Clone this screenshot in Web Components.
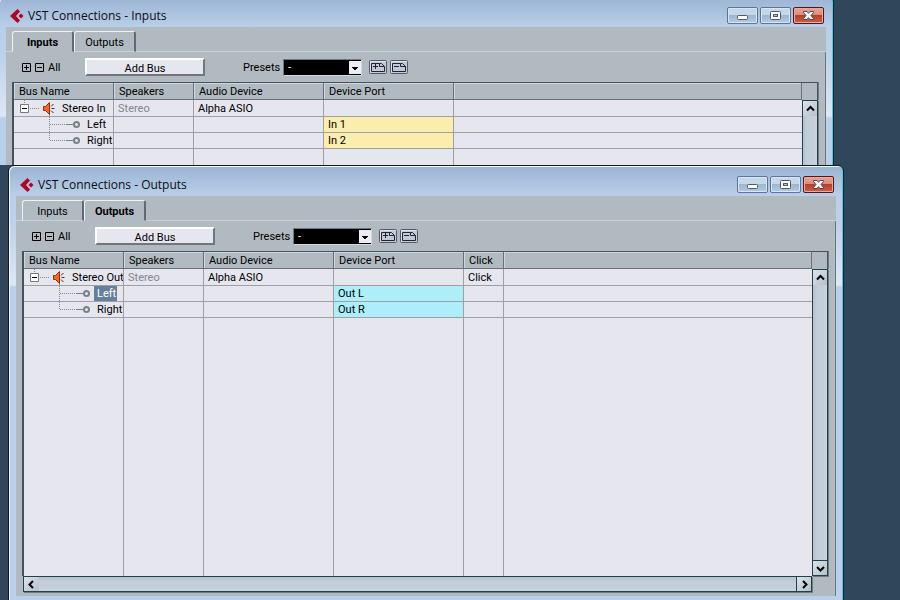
<!DOCTYPE html>
<html lang="en">
<head>
<meta charset="utf-8">
<title>VST Connections</title>
<style>
    html, body {
        height: 100%;
    }
    body {
        margin: 0;
        position: relative;
        overflow: hidden;
        background: #30465b;
        font: 11px/15px Roboto, "Liberation Sans", sans-serif;
        color: #000;
    }
    /* Overlapping windows on the desktop */
    #inputs {
        position: absolute;
        left: -2px;
        right: 66px;
        top: -4px;
        height: 169px;
    }
    #outputs {
        position: absolute;
        left: 8px;
        right: 56px;
        top: 165px;
        bottom: -3px;
    }
</style>
</head>
<body>
<vst-window id="inputs" heading="VST Connections - Inputs">
    <tab-strip active="Inputs"></tab-strip>
    <tab-page>
        <bus-tools></bus-tools>
        <bus-grid kind="inputs"></bus-grid>
    </tab-page>
</vst-window>
<vst-window id="outputs" heading="VST Connections - Outputs">
    <tab-strip active="Outputs"></tab-strip>
    <tab-page>
        <bus-tools></bus-tools>
        <bus-grid kind="outputs"></bus-grid>
    </tab-page>
</vst-window>

<script>
const BUSES = {
    inputs: {
        columns: ["Bus Name", "Speakers", "Audio Device", "Device Port"],
        widths: [100, 80, 130, 130],
        bus: ["Stereo In", "Stereo", "Alpha ASIO", ""],
        ports: [["Left", "In 1"], ["Right", "In 2"]],
        color: "#faedae"
    },
    outputs: {
        columns: ["Bus Name", "Speakers", "Audio Device", "Device Port", "Click"],
        widths: [100, 80, 130, 130, 40],
        bus: ["Stereo Out", "Stereo", "Alpha ASIO", "", "Click"],
        ports: [["Left", "Out L"], ["Right", "Out R"]],
        selected: "Left",
        color: "#adeef8"
    }
};

class VstWindow extends HTMLElement {
    constructor() {
        super();
        this.attachShadow({mode: 'open'});
    }
    connectedCallback() {
        this.shadowRoot.innerHTML = `
            <style>
                :host {
                    display: flex;
                    flex-direction: column;
                    box-sizing: border-box;
                    overflow: hidden;
                    border: 1px solid #101820;
                    border-radius: 6px 6px 0 0;
                    padding: 0 7px 6px;
                    background: linear-gradient(#9ab4d2 0, #b9cfe9 30px, #bdd2eb 60px, #dce8f5 119px, #b9d0ea 121px);
                    box-shadow: inset 1px 1px 0 #f4faff, inset -1px 0 0 #35d3f5;
                }
                :host(#inputs) {
                    border-bottom: 0;
                    padding-bottom: 0;
                }
                header {
                    display: flex;
                    align-items: center;
                    flex: none;
                    height: 30px;
                    padding: 0 2px 0 4px;
                    gap: 2px;
                }
                h1 {
                    flex: 1;
                    margin: 0 0 0 2px;
                    padding-top: 8px;
                    font: 12px/18px "Open Sans", "Noto Sans", sans-serif;
                    color: #0c0c14;
                }
                .logo {
                    margin-top: 7px;
                }
                main {
                    flex: 1;
                    min-height: 0;
                    display: flex;
                    flex-direction: column;
                    background: #b1bac0;
                }
            </style>
            <header>
                <svg class="logo" width="14" height="14" viewBox="0 0 14 14">
                    <path d="M7.5 0L10 2.5L6 7L10 11.5L7.5 14L0 7Z" fill="#b00426"/>
                    <path d="M11 4.5L13.5 7L11 9.5L8.5 7Z" fill="#b00426"/>
                </svg>
                <h1></h1>
                <window-button action="minimize"></window-button>
                <window-button action="maximize"></window-button>
                <window-button action="close"></window-button>
            </header>
            <main><slot></slot></main>
        `;
        this.shadowRoot.querySelector("h1").textContent = this.getAttribute("heading");
    }
}

class WindowButton extends HTMLElement {
    constructor() {
        super();
        this.attachShadow({mode: 'open'});
    }
    connectedCallback() {
        const glyphs = {
            minimize: `<rect x="10.5" y="8.5" width="10" height="4" rx="1" fill="#fff" stroke="#50586a"/>`,
            maximize: `<rect x="10.5" y="4.5" width="10" height="8" rx="1" fill="#fff" stroke="#50586a"/>
                <rect x="13.5" y="7.5" width="4" height="2" fill="#a9c0dc" stroke="#50586a"/>`,
            close: `<path d="M10.5 4.5H14L15.5 6.3L17 4.5H20.5V5.5L18 8.5L20.5 11.5V12.5H17L15.5 10.7L14 12.5H10.5V11.5L13 8.5L10.5 5.5Z" fill="#f8f8f8" stroke="#504858"/>`
        };
        const action = this.getAttribute("action");
        this.shadowRoot.innerHTML = `
            <style>
                :host {
                    display: block;
                    padding-top: 7px;
                }
                button {
                    display: block;
                    box-sizing: border-box;
                    width: 31px;
                    height: 17px;
                    padding: 0;
                    border: 1px solid #5f7593;
                    border-radius: 2px;
                    background: linear-gradient(#c6d7ea 0 45%, #9ab4d0 45%, #b4cce4);
                    box-shadow: inset 0 0 0 1px #d7e6f5;
                }
                :host([action="close"]) button {
                    border-color: #561420;
                    background: linear-gradient(#e5a598, #dc8c7c 45%, #b43c24 45%, #cc6048);
                    box-shadow: inset 0 0 0 1px #e9aaa0;
                }
                svg {
                    display: block;
                    margin: -1px;
                }
            </style>
            <button type="button" aria-label="${action}">
                <svg width="31" height="17" viewBox="0 0 31 17">${glyphs[action]}</svg>
            </button>
        `;
    }
}

class TabStrip extends HTMLElement {
    constructor() {
        super();
        this.attachShadow({mode: 'open'});
    }
    connectedCallback() {
        const active = this.getAttribute("active");
        this.shadowRoot.innerHTML = `
            <style>
                :host {
                    display: block;
                    flex: none;
                }
                .tabs {
                    display: flex;
                    height: 21px;
                    padding-top: 4px;
                }
                .tabs::before, .tabs::after {
                    content: "";
                    width: 6px;
                    border-bottom: 1px solid #c6d2da;
                }
                .tabs::after {
                    flex: 1;
                }
                button {
                    box-sizing: border-box;
                    width: 62px;
                    padding: 1px 0 0;
                    border: 1px solid #eef2f4;
                    border-right: 2px solid #626a70;
                    border-radius: 3px 3px 0 0;
                    border-bottom-color: #c6d2da;
                    background: none;
                    font: inherit;
                    color: inherit;
                }
                button[aria-selected="true"] {
                    border-bottom-color: transparent;
                    font-weight: bold;
                }
            </style>
            <div class="tabs" role="tablist">
                ${["Inputs", "Outputs"].map(t =>
                    `<button type="button" role="tab" aria-selected="${t == active}">${t}</button>`
                ).join("")}
            </div>
        `;
    }
}

class TabPage extends HTMLElement {
    constructor() {
        super();
        this.attachShadow({mode: 'open'});
        this.shadowRoot.innerHTML = `
            <style>
                :host {
                    display: flex;
                    flex-direction: column;
                    flex: 1;
                    min-height: 0;
                    padding: 0 6px 3px;
                    border-right: 1px solid #6e777d;
                }
            </style>
            <slot></slot>
        `;
    }
}

class BusTools extends HTMLElement {
    constructor() {
        super();
        this.attachShadow({mode: 'open'});
        this.shadowRoot.innerHTML = `
            <style>
                :host {
                    display: flex;
                    align-items: center;
                    flex: none;
                    height: 30px;
                    padding-left: 10px;
                }
                button {
                    padding: 0;
                    border: 0;
                    background: none;
                    font: inherit;
                    color: inherit;
                }
                svg {
                    display: block;
                }
                .all {
                    display: flex;
                    align-items: center;
                    gap: 4px;
                    width: 63px;
                }
                .add {
                    box-sizing: border-box;
                    width: 120px;
                    height: 18px;
                    margin-right: 38px;
                    padding-top: 1px;
                    background: #e6e6ee;
                    border: 2px solid;
                    border-color: #fff #70767c #70767c #fff;
                }
                label {
                    width: 40px;
                }
                .combo {
                    display: grid;
                    width: 79px;
                    height: 17px;
                    box-sizing: border-box;
                    border: 1px solid #6e7880;
                    border-right-color: #d4d8dc;
                    border-bottom-color: #d4d8dc;
                    margin-right: 7px;
                    background: #000;
                }
                .combo > * {
                    grid-area: 1 / 1;
                }
                select {
                    appearance: none;
                    width: 100%;
                    height: 15px;
                    padding: 0 16px 0 4px;
                    border: 0;
                    border-radius: 0;
                    background: #000;
                    color: #fff;
                    font: inherit;
                }
                .combo svg {
                    justify-self: end;
                    align-self: center;
                    pointer-events: none;
                }
                .preset {
                    margin-right: 3px;
                }
            </style>
            <div class="all">
                <button type="button" aria-label="Expand all">
                    <svg width="9" height="9" viewBox="0 0 9 9"><path d="M.5.5H8.5V8.5H.5ZM2 4.5H7M4.5 2V7" fill="none" stroke="#000"/></svg>
                </button>
                <button type="button" aria-label="Collapse all">
                    <svg width="9" height="9" viewBox="0 0 9 9"><path d="M.5.5H8.5V8.5H.5ZM2 4.5H7" fill="none" stroke="#000"/></svg>
                </button>
                <span>All</span>
            </div>
            <button type="button" class="add">Add Bus</button>
            <label for="presets">Presets</label>
            <div class="combo">
                <select id="presets"><option>-</option></select>
                <svg width="12" height="13" viewBox="0 0 12 13">
                    <rect width="12" height="13" fill="#ececf2"/>
                    <path d="M3 6H9V7H8V8H7V9H5V8H4V7H3Z" fill="#000"/>
                </svg>
            </div>
            <button type="button" class="preset" aria-label="Store preset">
                <svg width="18" height="15" viewBox="0 0 18 15">
                    <rect x=".5" y=".5" width="17" height="13" rx="1" fill="#c3c8da" stroke="#555a66"/>
                    <path d="M1.5 12.5V1.5H16.5" fill="none" stroke="#e0e3ee"/>
                    <path d="M10.5 3.5H2.5V11.5H15.5V6.5L12.5 3.5H10.5V6.5H15.5M4 6.5H9M6.5 4V9" fill="none" stroke="#20242c"/>
                </svg>
            </button>
            <button type="button" class="preset" aria-label="Delete preset">
                <svg width="18" height="15" viewBox="0 0 18 15">
                    <rect x=".5" y=".5" width="17" height="13" rx="1" fill="#c3c8da" stroke="#555a66"/>
                    <path d="M1.5 12.5V1.5H16.5" fill="none" stroke="#e0e3ee"/>
                    <path d="M10.5 3.5H2.5V11.5H15.5V6.5L12.5 3.5H10.5V6.5H15.5M4 6.5H9" fill="none" stroke="#20242c"/>
                </svg>
            </button>
        `;
    }
}

class ScrollBar extends HTMLElement {
    constructor() {
        super();
        this.attachShadow({mode: 'open'});
    }
    connectedCallback() {
        const vertical = this.hasAttribute("vertical");
        const arrows = vertical
            ? ["M4 9.5L7.5 6L11 9.5", "M4 6L7.5 9.5L11 6"]
            : ["M9 4L5.5 7.5L9 11", "M6 4L9.5 7.5L6 11"];
        const names = vertical ? ["Scroll up", "Scroll down"] : ["Scroll left", "Scroll right"];
        const button = i => `
            <button type="button" aria-label="${names[i]}">
                <svg width="15" height="15" viewBox="0 0 15 15"><path d="${arrows[i]}" fill="none" stroke="#000" stroke-width="2"/></svg>
            </button>`;
        this.shadowRoot.innerHTML = `
            <style>
                :host {
                    display: flex;
                    justify-content: space-between;
                    box-sizing: border-box;
                    border: 1px solid #24414a;
                    background: linear-gradient(#b4c2ce, #c2ceda 30%, #c2ceda 75%, #ccd6e0);
                    box-shadow: 1px 1px 0 #6e7a84;
                }
                :host([vertical]) {
                    flex-direction: column;
                    background: linear-gradient(90deg, #b4c2ce, #c2ceda 30%, #c2ceda 75%, #ccd6e0);
                }
                button {
                    display: flex;
                    align-items: center;
                    justify-content: center;
                    box-sizing: border-box;
                    width: 15px;
                    height: 14px;
                    padding: 0;
                    border: 0 solid #24414a;
                    background: linear-gradient(135deg, #dce4ec, #b4c0cc);
                }
                button:first-child {
                    border-right-width: 1px;
                }
                button:last-child {
                    border-left-width: 1px;
                }
                :host([vertical]) button {
                    width: 14px;
                    height: 15px;
                    border-width: 0;
                }
                :host([vertical]) button:first-child {
                    border-bottom-width: 1px;
                }
                :host([vertical]) button:last-child {
                    border-top-width: 1px;
                }
                svg {
                    flex: none;
                }
            </style>
            ${button(0)}${button(1)}
        `;
    }
}

class BusGrid extends HTMLElement {
    constructor() {
        super();
        this.attachShadow({mode: 'open'});
    }
    connectedCallback() {
        const data = BUSES[this.getAttribute("kind")];
        this.shadowRoot.innerHTML = `
            <style>
                :host {
                    flex: 1;
                    min-height: 240px;
                    display: grid;
                    grid-template: 18px minmax(0, 1fr) 16px / minmax(0, 1fr) 16px;
                    padding: 0 1px 1px 0;
                    --frame: #46525c;
                    --line: #a0a0a4;
                }
                .area {
                    grid-area: 1 / 1 / 3 / 2;
                    overflow: hidden;
                    border: solid var(--frame);
                    border-width: 1px 0 0 2px;
                }
                .corner {
                    box-sizing: border-box;
                    border: solid var(--frame);
                    border-width: 1px 1px 0 0;
                    box-shadow: 1px 0 0 #6e7a84;
                }
                scroll-bar[vertical] {
                    grid-area: 2 / 2;
                }
                scroll-bar:not([vertical]) {
                    grid-area: 3 / 1;
                    margin-left: 1px;
                }
                table {
                    width: 100%;
                    height: 100%;
                    table-layout: fixed;
                    border-spacing: 0;
                    background: #e6e6ef;
                }
                th, td {
                    box-sizing: border-box;
                    height: 16px;
                    padding: 0 0 0 4px;
                    border: solid var(--line);
                    border-width: 0 1px 1px 0;
                    overflow: hidden;
                    white-space: nowrap;
                    text-align: left;
                    vertical-align: top;
                }
                th {
                    height: 17px;
                    padding: 1px 0 0 5px;
                    border-color: #66717a;
                    background: #b1bac0;
                    box-shadow: inset 1px 1px 0 #c9d8e0;
                    font-weight: normal;
                }
                td:last-child {
                    border-right: 0;
                }
                .bus td {
                    height: 17px;
                    padding-top: 1px;
                }
                .rest td {
                    height: auto;
                    border-bottom: 0;
                }
                .speakers {
                    color: #85858c;
                }
                .port {
                    background: ${data.color};
                }
                .bus td.name, td.name {
                    padding: 0;
                }
                .node {
                    display: flex;
                    height: 15px;
                }
                .bus .node {
                    height: 16px;
                }
                .node > * {
                    flex: none;
                }
                .node span {
                    padding: 0 1px 0 3px;
                }
                .bus .node span {
                    padding-top: 1px;
                }
                .node .selected {
                    background: #66809a;
                    color: #fff;
                }
                .toggle {
                    padding: 0;
                    border: 0;
                    background: none;
                }
                svg {
                    display: block;
                }
            </style>
            <div class="area">
                <table>
                    <colgroup>${data.widths.map(w => `<col style="width: ${w}px">`).join("")}<col></colgroup>
                    <thead><tr>${data.columns.map(c => `<th scope="col">${c}</th>`).join("")}<th></th></tr></thead>
                    <tbody>
                        <tr class="bus">
                            <td class="name">${this._busNode(data.bus[0])}</td>
                            <td class="speakers">${data.bus[1]}</td>
                            ${data.bus.slice(2).map(t => `<td>${t}</td>`).join("")}<td></td>
                        </tr>
                        ${data.ports.map((p, i) => this._portRow(p, i, data)).join("")}
                        <tr class="rest">${"<td></td>".repeat(data.columns.length + 1)}</tr>
                    </tbody>
                </table>
            </div>
            <div class="corner"></div>
            <scroll-bar vertical></scroll-bar>
            <scroll-bar></scroll-bar>
        `;
    }
    _busNode(name) {
        return `
            <div class="node">
                <button type="button" class="toggle" aria-label="Collapse">
                    <svg width="16" height="16" viewBox="0 0 16 16">
                        <path d="M10.5 0V4" stroke="#888" stroke-dasharray="1 1"/>
                        <path d="M6.5 4.5H14.5V12.5H6.5Z" fill="#fff" stroke="#777"/>
                        <path d="M8 8.5H13" stroke="#000"/>
                    </svg>
                </button>
                <svg width="29" height="16" viewBox="16 0 29 16">
                    <path d="M16 8.5H26M35.5 15V16" stroke="#888" stroke-dasharray="1 1"/>
                    <path d="M29.5 6.5H31.5L35.5 2.5V14.5L31.5 10.5H29.5Z" fill="#ff6420" stroke="#8c3010"/>
                    <path d="M37 6.5L39.5 4M37.5 8.5H40.5M37 10.5L39.5 13" stroke="#333" fill="none"/>
                </svg>
                <span>${name}</span>
            </div>`;
    }
    _portRow([name, port], i, data) {
        const last = i == data.ports.length - 1;
        return `
            <tr>
                <td class="name">
                    <div class="node">
                        <svg width="70" height="15" viewBox="0 0 70 15">
                            <path d="M35.5 0V${last ? 8 : 15}M36 7.5H51" fill="none" stroke="#888" stroke-dasharray="1 1"/>
                            <path d="M52 7.5H59" stroke="#788088"/>
                            <circle cx="62.5" cy="7.5" r="2.5" fill="#e6e6ef" stroke="#78828c" stroke-width="2"/>
                        </svg>
                        <span class="${name == data.selected ? "selected" : ""}">${name}</span>
                    </div>
                </td>
                <td></td>
                <td></td>
                <td class="port">${port}</td>
                ${"<td></td>".repeat(data.columns.length - 3)}
            </tr>`;
    }
}

customElements.define("window-button", WindowButton);
customElements.define("scroll-bar", ScrollBar);
customElements.define("tab-strip", TabStrip);
customElements.define("tab-page", TabPage);
customElements.define("bus-tools", BusTools);
customElements.define("bus-grid", BusGrid);
customElements.define("vst-window", VstWindow);
</script>
</body>
</html>
